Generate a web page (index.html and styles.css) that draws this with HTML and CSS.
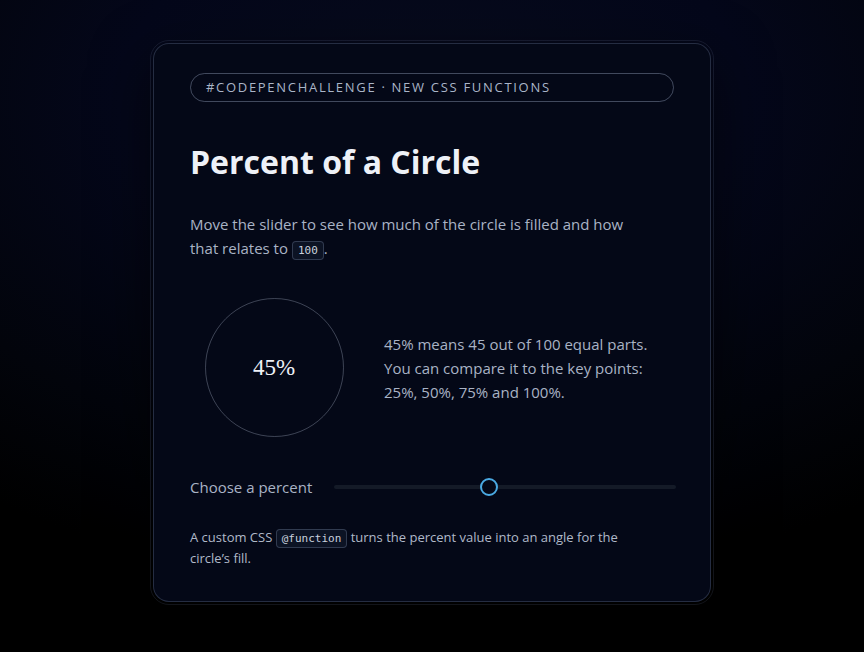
FILE: index.html
```html
<!DOCTYPE html>
<html lang="en">
<head>
<meta charset="utf-8">
<title>Percent of a Circle</title>
<link rel="stylesheet" href="styles.css">
</head>
<body>
<main class="card">
  <div class="pill">#CodePenChallenge · New CSS Functions</div>
  <h1 class="title">Percent of a Circle</h1>
  <p class="lead">Move the slider to see how much of the circle is filled and how that relates to <code class="code">100</code>.</p>
  <section class="demo">
    <div class="circle-col">
      <div class="circle"><span class="value">45%</span></div>
    </div>
    <p class="explain">45% means 45 out of 100 equal parts. You can compare it to the key points: 25%, 50%, 75% and 100%.</p>
  </section>
  <label class="control">
    <span class="control-label">Choose a percent</span>
    <input class="range" type="range" min="0" max="100" value="45">
  </label>
  <p class="note">A custom CSS <code class="code">@function</code> turns the percent value into an angle for the circle’s fill.</p>
</main>
</body>
</html>
```
FILE: styles.css
```css
* { box-sizing: border-box; }
html, body { height: 100%; }
body {
  margin: 0;
  padding-top: 43px;
  display: flex;
  justify-content: center;
  align-items: flex-start;
  font-family: "Open Sans", "Noto Sans", sans-serif;
  color: #a9b3c5;
  background: radial-gradient(ellipse 90% 75% at 50% 15%, #070b1c 0%, #04071a 40%, #02040b 75%, #000000 100%);
  background-color: #000;
}
.card {
  width: 558px;
  padding: 29px 36px 32px;
  background: #040817;
  border: 1px solid rgba(110, 125, 160, 0.32);
  border-radius: 16px;
  outline: 1px solid rgba(110, 125, 160, 0.16);
  outline-offset: 2px;
  box-shadow: 0 20px 60px rgba(0, 0, 0, 0.6);
}
.pill {
  border: 1px solid rgba(140, 152, 180, 0.45);
  border-radius: 999px;
  padding: 5px 15px;
  font-size: 13px;
  line-height: 17px;
  letter-spacing: 1.7px;
  text-transform: uppercase;
  color: #aab5c8;
}
.title {
  margin: 40px 0 0;
  font-size: 32px;
  line-height: 40px;
  font-weight: 700;
  color: #eef1f7;
}
.lead {
  margin: 30px 0 0;
  max-width: 455px;
  font-size: 15px;
  line-height: 24px;
  color: #a9b3c5;
}
.code {
  display: inline-block;
  font-family: "DejaVu Sans Mono", monospace;
  font-size: 11px;
  line-height: 15px;
  padding: 1px 5px;
  border: 1px solid rgba(120, 135, 165, 0.35);
  border-radius: 4px;
  background: rgba(30, 40, 60, 0.35);
  color: #c9d1de;
}
.demo {
  margin-top: 38px;
  display: grid;
  grid-template-columns: 168px 1fr;
  column-gap: 26px;
  align-items: center;
}
.circle-col { display: flex; justify-content: center; }
.circle {
  width: 139px;
  height: 139px;
  border-radius: 50%;
  border: 1px solid rgba(130, 140, 160, 0.45);
  display: flex;
  align-items: center;
  justify-content: center;
}
.value {
  font-family: "Liberation Serif", "DejaVu Serif", serif;
  font-weight: 400;
  font-size: 23px;
  color: #eef1f7;
}
.explain {
  margin: 0;
  font-size: 15px;
  line-height: 24px;
  color: #a9b3c5;
}
.control {
  margin-top: 40px;
  display: flex;
  align-items: center;
  gap: 22px;
}
.control-label {
  font-size: 15px;
  color: #a9b3c5;
  white-space: nowrap;
}
.range {
  -webkit-appearance: none;
  appearance: none;
  flex: 1;
  margin: 0 -2px 0 0;
  height: 20px;
  background: transparent;
}
.range::-webkit-slider-runnable-track {
  height: 4px;
  border-radius: 2px;
  background: #141a27;
}
.range::-webkit-slider-thumb {
  -webkit-appearance: none;
  width: 18px;
  height: 18px;
  margin-top: -7px;
  border-radius: 50%;
  border: 2px solid #4aa9e2;
  background: #040817;
}
.note {
  margin: 30px 0 0;
  font-size: 13px;
  line-height: 21px;
  color: #b0b9c9;
  max-width: 440px;
}
```
